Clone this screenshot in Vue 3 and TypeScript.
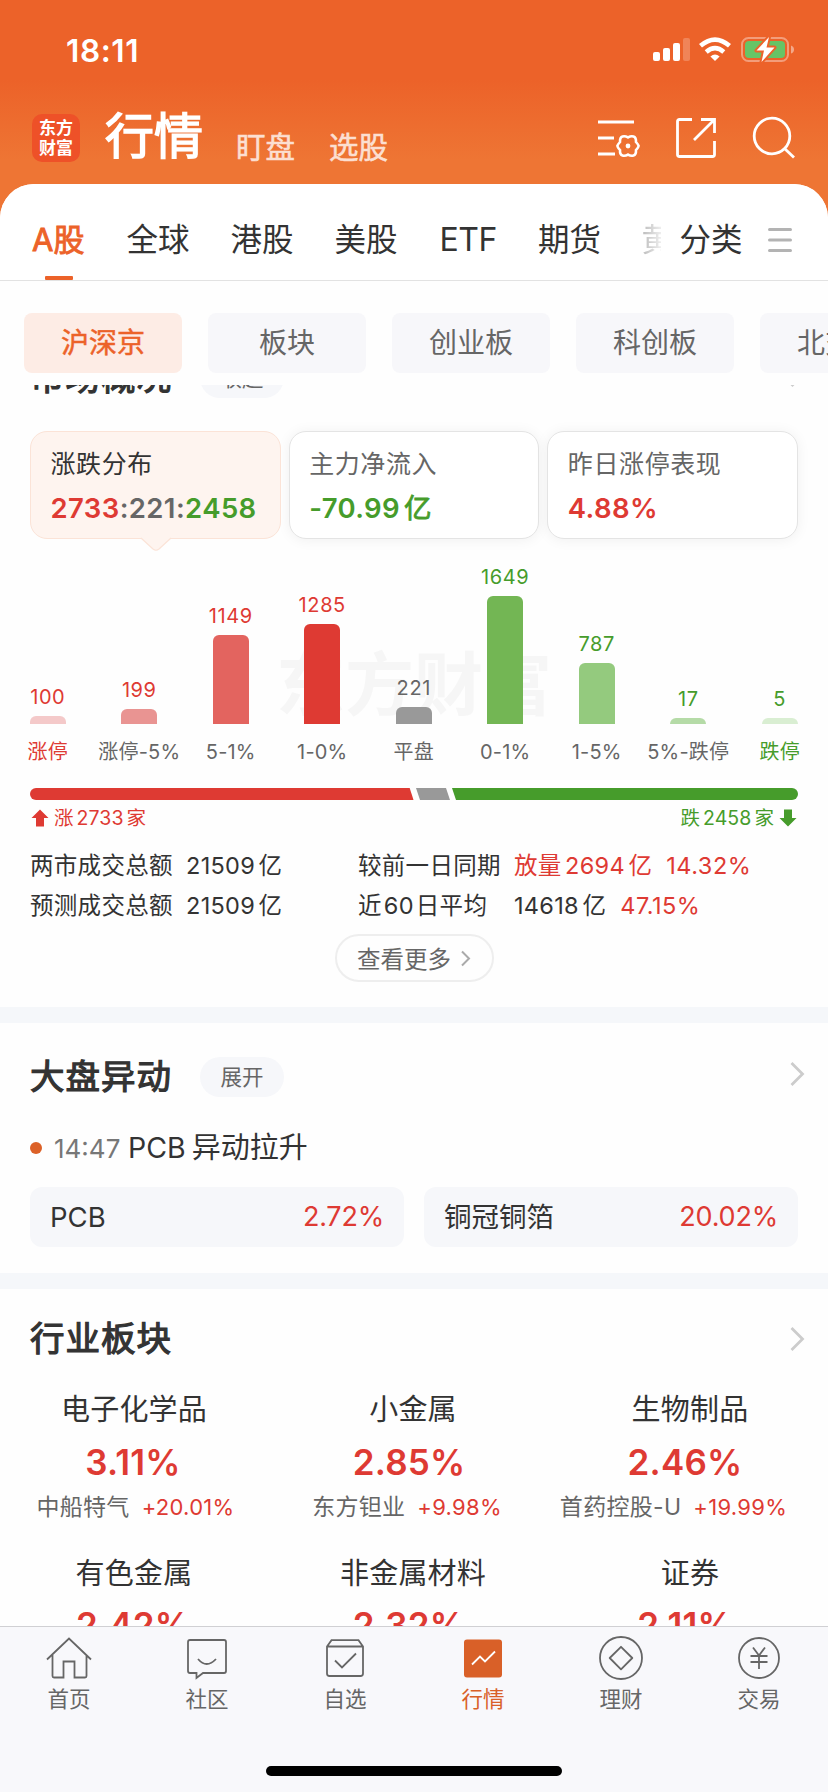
<script setup lang="ts">
interface Bar { value: number; label: string; height: number; color: string; tone: 'up' | 'down' | 'flat'; edge?: boolean }
interface Sector { name: string; pct: string; stock?: string; change?: string }

const tabs = ['全球', '港股', '美股', 'ETF', '期货', '黄金']
const chips = ['沪深京', '板块', '创业板', '科创板', '北交所']

const bars: Bar[] = [
  { value: 100, label: '涨停', height: 8, color: '#f4c9c9', tone: 'up', edge: true },
  { value: 199, label: '涨停-5%', height: 15.5, color: '#e99492', tone: 'up' },
  { value: 1149, label: '5-1%', height: 89, color: '#e3645f', tone: 'up' },
  { value: 1285, label: '1-0%', height: 100, color: '#de3a33', tone: 'up' },
  { value: 221, label: '平盘', height: 17, color: '#999999', tone: 'flat' },
  { value: 1649, label: '0-1%', height: 128, color: '#73b654', tone: 'down' },
  { value: 787, label: '1-5%', height: 61, color: '#94ca7e', tone: 'down' },
  { value: 17, label: '5%-跌停', height: 6, color: '#b5dba7', tone: 'down' },
  { value: 5, label: '跌停', height: 6, color: '#d9eed2', tone: 'down', edge: true },
]

const sectors: Sector[] = [
  { name: '电子化学品', pct: '3.11%', stock: '中船特气', change: '+20.01%' },
  { name: '小金属', pct: '2.85%', stock: '东方钽业', change: '+9.98%' },
  { name: '生物制品', pct: '2.46%', stock: '首药控股-U', change: '+19.99%' },
  { name: '有色金属', pct: '2.42%' },
  { name: '非金属材料', pct: '2.32%' },
  { name: '证券', pct: '2.11%' },
]
</script>

<template>
  <div class="phone">
    <header class="status">
      <span class="clock">18:11</span>
      <svg class="status-icons" width="144" height="30" viewBox="0 0 144 30">
        <g fill="#fff">
          <rect x="2" y="17" width="7" height="9" rx="2" />
          <rect x="12" y="13" width="7" height="13" rx="2" />
          <rect x="22" y="8" width="7" height="18" rx="2" />
          <rect x="32" y="3" width="7" height="23" rx="2" opacity=".22" />
          <path d="M64 26 L59.4 21.4 Q64 17.6 68.6 21.4 Z" />
        </g>
        <g fill="none" stroke="#fff" stroke-width="4.6">
          <path d="M49.5 10.8 Q64 -1.6 78.5 10.8" />
          <path d="M55.2 17 Q64 9.4 72.800 17" />
        </g>
        <rect x="91" y="3" width="46" height="23" rx="6.5" fill="none" stroke="#fff" stroke-opacity=".38" stroke-width="2" />
        <path d="M140 10.5 Q143 11.5 143 14.5 Q143 17.5 140 18.5 Z" fill="#fff" opacity=".45" />
        <rect x="94" y="6" width="40" height="17" rx="4" fill="#67c466" />
        <path d="M118 2 L105.5 15.5 H113 L110.5 27 L123.500 12.500 H115.500 Z" fill="#fff" stroke="#ec632a" stroke-width="4" paint-order="stroke" stroke-linejoin="round" />
      </svg>
    </header>

    <div class="titlebar">
      <div class="logo"><span>东方</span><span>财富</span></div>
      <h1>行情</h1>
      <span class="sub s1">盯盘</span>
      <span class="sub s2">选股</span>
      <svg class="i-list" width="44" height="42" viewBox="0 0 44 42" fill="none" stroke="#fff" stroke-width="3">
        <path d="M1 5 H37 M1 21 H17 M1 37 H18" />
        <path d="M20.500 29 Q20.300 28 23 25 Q22.800 20.300 25.500 19.500 Q28 18.700 31 20.400 Q34 18.700 36.500 19.500 Q39.200 20.300 39 25 Q41.700 28 41.500 29 Q41.700 30 39 33 Q39.200 37.700 36.500 38.500 Q34 39.300 31 37.600 Q28 39.300 25.500 38.500 Q22.800 37.700 23 33 Q20.300 30 20.500 29 Z" stroke-width="2.600" />
        <circle cx="31" cy="29" r="2.400" fill="#fff" stroke="none" />
      </svg>
      <svg class="i-share" width="42" height="42" viewBox="0 0 42 42" fill="none" stroke="#fff" stroke-width="2.800">
        <path d="M17 2.500 H4.500 Q2.500 2.500 2.500 4.500 V37.500 Q2.500 39.500 4.500 39.500 H37.500 Q39.500 39.500 39.500 37.500 V24" />
        <path d="M26 2.500 H39.500 V16 M39 3 L19 23" />
      </svg>
      <svg class="i-search" width="44" height="44" viewBox="0 0 44 44" fill="none" stroke="#fff" stroke-width="2.800">
        <circle cx="20" cy="20" r="17.800" /><path d="M32 32 L42 41.500" />
      </svg>
    </div>

    <main class="sheet">
      <nav class="tabs">
        <span class="tab active">A股</span>
        <span v-for="t in tabs" :key="t" class="tab" :class="{ latin: t === 'ETF', fade: t === '黄金' }">{{ t }}</span>
        <span class="category">分类</span>
        <svg width="24" height="26" viewBox="0 0 24 26" stroke="#b3b3b3" stroke-width="3" stroke-linecap="round">
          <path d="M1.500 2.500 H22.500 M1.500 13 H22.500 M1.500 23.500 H22.500" />
        </svg>
      </nav>

      <div class="chips">
        <span v-for="(c, i) in chips" :key="c" class="chip" :class="{ on: i === 0 }">{{ c }}</span>
      </div>

      <div class="scroll">
        <section class="market">
          <div class="head">
            <h2>市场概况</h2><span class="pill">收起</span>
            <svg class="chev" width="16" height="26" viewBox="0 0 16 26"><path d="M2.500 2 L13.500 13 L2.500 24" /></svg>
          </div>

          <div class="cards">
            <div class="card selected">
              <span class="ct">涨跌分布</span>
              <span class="cv"><b class="up">2733</b><b class="flat">:221:</b><b class="down">2458</b></span>
              <svg class="tip" width="30" height="14" viewBox="0 0 30 14"><path d="M0 0 L12 11 Q15 13.500 18 11 L30 0" fill="#fef4ef" stroke="#fbe3d7" stroke-width="1.200" /></svg>
            </div>
            <div class="card">
              <span class="ct">主力净流入</span>
              <span class="cv down"><b>-70.99</b><span class="yi">亿</span></span>
            </div>
            <div class="card">
              <span class="ct">昨日涨停表现</span>
              <span class="cv up"><b>4.88%</b></span>
            </div>
          </div>

          <div class="chart">
            <div class="watermark">东方财富</div>
            <div v-for="b in bars" :key="b.label" class="col">
              <span class="num" :class="b.tone">{{ b.value }}</span>
              <i class="bar" :style="{ height: b.height + 'px', background: b.color }"></i>
              <span class="lab" :class="b.edge ? b.tone : ''">{{ b.label }}</span>
            </div>
          </div>

          <svg class="ratio" width="768" height="12" viewBox="0 0 768 12">
            <path d="M6 0 H379.700 L383.500 12 H6 A6 6 0 0 1 6 0 Z" fill="#de3a33" />
            <path d="M386 0 H416 L420 12 H390 Z" fill="#999" />
            <path d="M422 0 H762 A6 6 0 0 1 762 12 H426 Z" fill="#469c2b" />
          </svg>
          <div class="totals">
            <span class="up"><svg width="18" height="18" viewBox="0 0 18 18"><path d="M9 .5 L17.500 9 H13 V17.500 H5 V9 H.5 Z" fill="#de3a33" /></svg>涨<em>2733</em>家</span>
            <span class="down">跌<em>2458</em>家<svg width="18" height="18" viewBox="0 0 18 18"><path d="M9 17.500 L17.500 9 H13 V.5 H5 V9 H.5 Z" fill="#469c2b" /></svg></span>
          </div>

          <div class="stats">
            <div class="stat"><span class="k">两市成交总额</span><span>21509<u>亿</u></span></div>
            <div class="stat"><span class="k">较前一日同期</span><span class="up">放量<u>2694</u><u>亿</u><s>14.32%</s></span></div>
            <div class="stat"><span class="k">预测成交总额</span><span>21509<u>亿</u></span></div>
            <div class="stat"><span class="k">近<em>60</em>日平均</span><span>14618<u>亿</u><s class="up">47.15%</s></span></div>
          </div>
          <div class="more">查看更多<svg width="11" height="17" viewBox="0 0 11 17"><path d="M2 1.500 L9 8.500 L2 15.500" /></svg></div>
        </section>

        <section class="moves">
          <div class="head">
            <h2>大盘异动</h2><span class="pill">展开</span>
            <svg class="chev" width="16" height="26" viewBox="0 0 16 26"><path d="M2.500 2 L13.500 13 L2.500 24" /></svg>
          </div>
          <div class="event"><i class="dot"></i><span class="time">14:47</span><span class="evt">PCB<em>异动拉升</em></span></div>
          <div class="pair">
            <div class="box"><span>PCB</span><span class="up">2.72%</span></div>
            <div class="box"><span>铜冠铜箔</span><span class="up">20.02%</span></div>
          </div>
        </section>

        <section class="sectors">
          <div class="head">
            <h2>行业板块</h2>
            <svg class="chev" width="16" height="26" viewBox="0 0 16 26"><path d="M2.500 2 L13.500 13 L2.500 24" /></svg>
          </div>
          <div class="grid">
            <div v-for="s in sectors" :key="s.name" class="cell">
              <span class="name">{{ s.name }}</span>
              <span class="pct">{{ s.pct }}</span>
              <span v-if="s.stock" class="lead">{{ s.stock }}<em>{{ s.change }}</em></span>
            </div>
          </div>
        </section>
      </div>
    </main>

    <footer class="tabbar">
      <div class="items">
        <div class="item">
          <svg width="46" height="46" viewBox="0 0 46 46"><path d="M1 22.500 L23 1.500 L45 22.500 M6.500 18 V39 Q6.500 40.500 8 40.500 H17.500 V24.500 H28.500 V40.500 H39 Q40.500 40.500 40.500 39 V18" /></svg>首页
        </div>
        <div class="item">
          <svg width="46" height="46" viewBox="0 0 46 46"><path d="M6 3 H40 Q42 3 42 5 V34 Q42 36 40 36 H19 L12.500 41 V36 H6 Q4 36 4 34 V5 Q4 3 6 3 Z M14 22 Q22.500 32 32 22" /></svg>社区
        </div>
        <div class="item">
          <svg width="46" height="46" viewBox="0 0 46 46"><path d="M5 9.500 L9.500 3.200 H36.500 L41 9.500 V36.500 Q41 39 38.500 39 H7.500 Q5 39 5 36.500 Z M5 9.500 H41 M13 23.500 L20 30.500 L34 16.500" /></svg>自选
        </div>
        <div class="item on">
          <svg width="46" height="46" viewBox="0 0 46 46"><rect x="4" y="2.500" width="38" height="38" rx="3" fill="#d96028" stroke="none" /><path d="M12 27.500 L20 19.500 L25 24.500 L35 14.500" stroke="#fff" /></svg>行情
        </div>
        <div class="item">
          <svg width="46" height="46" viewBox="0 0 46 46"><circle cx="23" cy="21" r="21" /><path d="M23 9.800 L34.300 21 L23 32.300 L11.700 21 Z" stroke-linejoin="round" /></svg>理财
        </div>
        <div class="item">
          <svg width="46" height="46" viewBox="0 0 46 46"><circle cx="23" cy="21" r="20" /><path d="M17 10.500 L23 18.500 L29 10.500 M23 18.500 V32 M14.500 19 H31.500 M14.500 25 H31.500" /></svg>交易
        </div>
      </div>
      <i class="homebar"></i>
    </footer>
  </div>
</template>

<style>
html, body { margin: 0; background: #f8f8fb; }
</style>

<style scoped>
.phone {
  width: 828px; height: 1792px; display: flex; flex-direction: column; overflow: hidden;
  background: linear-gradient(#ec6229 0, #ec6229 80px, #ee7534 160px, #ee7534 240px);
  font-family: Inter, "Noto Sans CJK SC", sans-serif; color: #333; white-space: nowrap;
}
em, i, u, s { font-style: normal; text-decoration: none; }
h1, h2 { margin: 0; }
b { font-weight: 600; }
svg { display: block; flex: none; overflow: visible; }
.up { color: #de3a33; }
.down { color: #469c2b; }
.flat { color: #666; }

.status { height: 100px; flex: none; display: flex; align-items: center; justify-content: space-between; padding: 0 33px 0 66px; box-sizing: border-box; }
.clock { color: #fff; font-size: 31.500px; font-weight: 600; letter-spacing: .6px; }

.titlebar { height: 84px; flex: none; display: flex; align-items: flex-start; padding-left: 32px; color: #fff; }
.logo { width: 48px; height: 48px; margin-top: 14px; border-radius: 10px; background: #ee5128; display: flex; flex-direction: column; align-items: center; justify-content: center; font-weight: 700; font-size: 17px; line-height: 20px; }
.titlebar h1 { margin: 9px 0 0 25px; width: 100px; font-size: 49px; line-height: 56px; font-weight: 400; -webkit-text-stroke: 1.500px #fff; }
.sub { margin-top: 26px; font-size: 29.500px; line-height: 42px; color: #fcdfd1; -webkit-text-stroke: .6px #fcdfd1; }
.s1 { margin-left: 31px; width: 93px; }
.i-list { margin: 17px 0 0 auto; }
.i-share { margin: 17px 0 0 34px; }
.i-search { margin: 16px 32px 0 35px; }

.sheet { flex: 1; min-height: 0; display: flex; flex-direction: column; background: #fefefe; border-radius: 34px 34px 0 0; overflow: hidden; }
.tabs { height: 97px; flex: none; box-sizing: border-box; border-bottom: 1px solid #e2e2e2; background: #fff; display: flex; align-items: center; padding: 16px 36px 0 32px; font-size: 31.500px; }
.tab { width: 104px; line-height: 80px; flex: none; }
.tab.active { width: 94.500px; color: #ec6229; font-size: 31px; -webkit-text-stroke: .9px #ec6229; position: relative; }
.tab.active::after { content: ""; position: absolute; left: 13px; bottom: 0; width: 28px; height: 4px; border-radius: 1px; background: #ec6229; }
.tab.latin { padding-left: 1px; width: 98.500px; font-size: 32px; letter-spacing: -0.5px; }
.tab.latin + .tab { width: 103.500px; }
.tab.fade { width: 19px; overflow: hidden; color: transparent; background: linear-gradient(90deg, #bbb, #eee); -webkit-background-clip: text; background-clip: text; }
.category { margin-left: 19px; width: 88px; flex: none; line-height: 80px; }

.chips { display: flex; gap: 26px; padding: 32px 24px 12px; flex: none; }
.chip { width: 158px; height: 60px; line-height: 60px; flex: none; text-align: center; border-radius: 8px; background: #f7f7fa; color: #666; font-size: 28px; }
.chip.on { background: #fdece5; color: #ec6229; -webkit-text-stroke: .5px #ec6229; }

.scroll { flex: 1; min-height: 0; overflow: hidden; }
.head { height: 40px; padding: 0 23px 0 30px; display: flex; align-items: center; }
.head h2 { font-size: 34.500px; line-height: 40px; font-weight: 400; -webkit-text-stroke: 1.200px #333; letter-spacing: 1px; color: #333; }
.pill { margin-left: 28px; width: 84px; height: 40px; line-height: 40px; border-radius: 20px; text-align: center; background: #f6f7fa; color: #666; font-size: 21.500px; }
.chev { margin-left: auto; transform: translateY(-3px); }
.chev path, .more path { fill: none; stroke: #ccc; stroke-width: 2.800; }

.market { margin-top: -27px; height: 649px; border-bottom: 16px solid #f5f7fa; }
.cards { display: grid; grid-template-columns: repeat(3, 1fr); gap: 8px; padding: 33px 30px 0; }
.card { height: 108px; box-sizing: border-box; border: 1px solid #e4e4e4; border-radius: 17px; background: #fff; box-shadow: 0 1px 14px rgba(0,0,0,.06); padding: 14px 19.500px; display: flex; flex-direction: column; gap: 8px; color: #666; }
.card.selected { position: relative; background: #fef4ef; border-color: #fbe3d7; box-shadow: none; color: #333; }
.ct { font-size: 25px; line-height: 36px; letter-spacing: .6px; }
.cv { font-size: 27.500px; line-height: 36px; letter-spacing: .4px; }
.yi { margin-left: 4px; -webkit-text-stroke: .8px #469c2b; }
.tip { position: absolute; left: 110px; top: 105.500px; }

.chart { position: relative; display: grid; grid-template-columns: repeat(9, 91.500px); height: 249px; margin-left: 2px; }
.col { position: relative; height: 227px; display: flex; flex-direction: column; justify-content: flex-end; align-items: center; }
.num { font-size: 20px; line-height: 20px; letter-spacing: .6px; margin-bottom: 9px; }
.bar { width: 36px; border-radius: 6px 6px 0 0; }
.lab { font-size: 20px; line-height: 28px; margin-top: 14px; color: #666; letter-spacing: .2px; }
.lab.up { color: #de3a33; }
.lab.down { color: #469c2b; }
.watermark { position: absolute; left: 274px; top: 102px; font-size: 69px; line-height: 88px; font-weight: 700; color: #f6f6f6; }

.ratio { margin-left: 30px; }
.totals { display: flex; justify-content: space-between; padding: 0 31px 0 31px; height: 36px; font-size: 19.500px; line-height: 36px; }
.totals span { display: flex; align-items: center; }
.totals em { margin: 0 3px; font-size: 19.500px; letter-spacing: .1px; }
.totals .up svg { margin-right: 5px; }
.totals .down svg { margin-left: 5px; }

.stats { display: grid; grid-template-columns: 328px auto; padding: 10px 0 0 30px; font-size: 23.500px; line-height: 40px; letter-spacing: .3px; }
.stat { display: flex; }
.stat .k { width: 156px; }
.stat em { margin: 0 2px; }
.stats u { margin-left: 3.500px; }
.stats s { margin-left: 14px; letter-spacing: .5px; }
.more { margin: 8px auto 0; width: 159px; height: 48px; box-sizing: border-box; border: 2px solid #eee; border-radius: 24px; display: flex; align-items: center; justify-content: center; gap: 9px; font-size: 23.500px; color: #666; }
.more path { stroke: #aaa; stroke-width: 2; }

.moves { height: 266px; box-sizing: border-box; padding-top: 34px; border-bottom: 16px solid #f5f7fa; }
.event { display: flex; align-items: center; height: 50px; margin: 26px 0 14px 30px; line-height: 50px; }
.dot { width: 12px; height: 12px; border-radius: 50%; background: #dc6128; margin-right: 12px; }
.time { width: 74px; font-size: 26px; color: #777; position: relative; top: 1px; }
.evt { font-size: 28.500px; }
.evt em { margin-left: 6px; font-size: 29px; }
.pair { display: grid; grid-template-columns: 1fr 1fr; gap: 20px; padding: 0 30px; }
.box { height: 60px; line-height: 60px; padding: 0 20px; display: flex; justify-content: space-between; align-items: center; border-radius: 12px; background: #f6f7fa; font-size: 27.500px; }
.box .up { font-size: 27px; letter-spacing: -.2px; }

.sectors { padding-top: 30px; }
.sectors .chev { transform: none; }
.grid { display: grid; grid-template-columns: repeat(3, 276px); grid-auto-rows: 163.500px; margin-top: 30px; }
.cell { display: flex; flex-direction: column; align-items: center; }
.name { font-size: 29px; line-height: 42px; letter-spacing: .2px; margin-right: 2px; }
.pct { font-size: 35px; line-height: 46px; font-weight: 600; color: #de3a33; margin: 7.500px 10px 0 0; letter-spacing: .2px; }
.lead { font-size: 23px; line-height: 34px; margin: 5px 5px 0 0; color: #666; letter-spacing: .3px; }
.cell:nth-child(3n + 1) .name { margin-right: 8px; }
.cell:nth-child(3n + 2) .lead { margin-right: 14px; }
.cell:nth-child(3n) .lead { margin-right: 33px; }
.cell:nth-child(3n) .name { margin-right: 0; }
.lead em { margin-left: 12px; color: #de3a33; font-size: 22px; }

.tabbar { height: 166px; flex: none; box-sizing: border-box; border-top: 1px solid #d0d0d3; background: #f8f8fb; display: flex; flex-direction: column; align-items: center; }
.items { display: flex; width: 828px; height: 139px; }
.item { width: 138px; display: flex; flex-direction: column; align-items: center; padding-top: 10px; box-sizing: border-box; font-size: 21.500px; line-height: 33px; color: #666; }
.item svg { fill: none; stroke: #666; stroke-width: 1.800; }
.item.on { color: #d96028; }
.homebar { width: 296px; height: 10px; border-radius: 5px; background: #000; }
</style>
